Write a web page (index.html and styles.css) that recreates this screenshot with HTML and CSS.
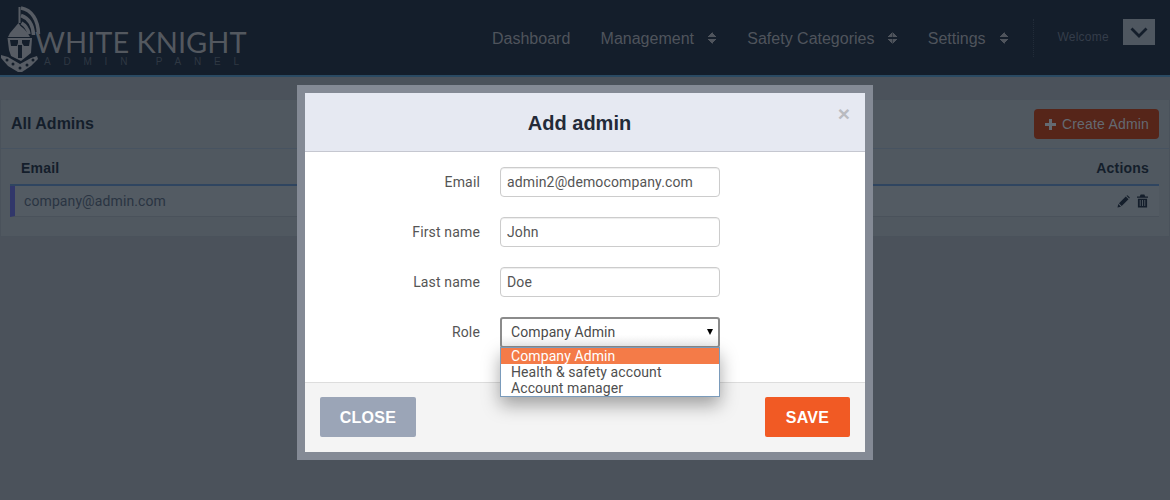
FILE: index.html
```html
<!DOCTYPE html>
<html lang="en">
<head>
<meta charset="utf-8">
<title>All Admins</title>
<link rel="stylesheet" href="styles.css">
</head>
<body>
<header class="topbar">
  <div class="logo">
    <svg class="helmet" width="40" height="70" viewBox="0 0 40 70">
      <path class="plume" d="M20 5C31 7 37 17 37.500 31M20 12.500C27 15 32 21 32.500 32M20.500 20C24 22 27 26 28 31"/>
      <g fill="#575c64">
        <path d="M17.500 4h2v16h-2z"/>
        <path d="M17.500 20 9 30l-2 4h22c-2-4-5-8-9.500-11z"/>
        <path d="M6.500 35H31l-1 15-10 8-10-5-2-6z"/>
        <path d="M0 52l7 2 12 7 11-6 6-2 1 3-7 7-9 6h-4l-10-6-7-8z"/>
      </g>
      <g fill="#141e2b">
        <path d="M9 37h8v3l-1 3H10zM21 37h8l-1 6h-5l-2-3z"/>
        <path d="M17 42h4v13h-4z"/>
        <circle cx="6" cy="57" r="1.500"/><circle cx="12" cy="61" r="1.500"/><circle cx="19" cy="65" r="1.500"/><circle cx="26" cy="62" r="1.500"/><circle cx="32" cy="57" r="1.500"/>
      </g>
    </svg>
    <div class="logo-text">
      <div class="logo-name">WHITE KNIGHT</div>
      <div class="logo-sub">ADMIN PANEL</div>
    </div>
  </div>
  <nav class="nav">
    <a class="nav-item">Dashboard</a>
    <a class="nav-item">Management<span class="updown"></span></a>
    <a class="nav-item">Safety Categories<span class="updown"></span></a>
    <a class="nav-item">Settings<span class="updown"></span></a>
  </nav>
  <div class="user">
    <span class="welcome">Welcome</span>
    <span class="user-toggle">
      <svg width="18" height="11" viewBox="0 0 18 11"><path d="M1.500 1.500 9 9l7.500-7.500" fill="none" stroke="#141e2b" stroke-width="2.800"/></svg>
    </span>
  </div>
</header>

<main class="content">
  <section class="panel">
    <div class="panel-head">
      <h2 class="panel-title">All Admins</h2>
      <button class="create-btn"><span class="plus"></span>Create Admin</button>
    </div>
    <div class="panel-body">
      <div class="table-head"><span>Email</span><span>Actions</span></div>
      <div class="table-row">
        <span>company@admin.com</span>
        <span class="row-actions">
          <svg width="13" height="13" viewBox="0 0 13 13"><path d="M0.500 12.500l0.800-3.500 2.700 2.700zM2 8.300 8.800 1.500l2.700 2.700-6.800 6.800zM9.500 0.800l1-0.500 2.300 2.300-0.600 1z" fill="#141e2b"/></svg>
          <svg width="11" height="14" viewBox="0 0 12 14"><path d="M4 0h4l1 2h3v1.500H0V2h3zM1 4.500h10V14H1zM3 6v6.500h1V6zm2.500 0v6.500h1V6zM8 6v6.500h1V6z" fill="#141e2b" fill-rule="evenodd"/></svg>
        </span>
      </div>
    </div>
  </section>
</main>

<div class="modal">
  <div class="modal-head">
    <h3 class="modal-title">Add admin</h3>
    <span class="modal-x">×</span>
  </div>
  <div class="modal-body">
    <div class="field"><label class="field-label">Email</label><input class="field-input" value="admin2@democompany.com"></div>
    <div class="field"><label class="field-label">First name</label><input class="field-input" value="John"></div>
    <div class="field"><label class="field-label">Last name</label><input class="field-input" value="Doe"></div>
    <div class="field">
      <label class="field-label">Role</label>
      <div class="select-wrap">
        <div class="select-box">Company Admin<span class="select-caret"></span></div>
        <ul class="select-list">
          <li class="active">Company Admin</li>
          <li>Health &amp; safety account</li>
          <li>Account manager</li>
        </ul>
      </div>
    </div>
  </div>
  <div class="modal-foot">
    <button class="btn btn-close">CLOSE</button>
    <button class="btn btn-save">SAVE</button>
  </div>
</div>
</body>
</html>
```
FILE: styles.css
```css
* { box-sizing: border-box; }
html, body { height: 100%; }
body {
  margin: 0;
  height: 500px;
  overflow: hidden;
  background: #4b525b;
  font-family: "Liberation Sans", Arial, sans-serif;
  color: #141e2b;
}
.topbar {
  height: 77px;
  background: #141e2b;
  border-bottom: 2px solid #2a4a63;
  display: flex;
  align-items: flex-start;
}
.logo { display: flex; width: 492px; flex: none; padding: 3px 0 0 1px; }
.helmet { flex: none; }
.plume { fill: none; stroke: #575c64; stroke-width: 3.500px; }
.logo-text { margin-left: -6px; padding-top: 24px; }
.logo-name {
  font-family: Lato, "Liberation Sans", sans-serif;
  font-size: 29px;
  line-height: 30px;
  color: #53585f;
  white-space: nowrap;
}
.logo-sub {
  font-size: 10px;
  line-height: 10px;
  letter-spacing: 12.800px;
  color: #2f3843;
  padding-left: 9px;
  white-space: nowrap;
}
.nav { display: flex; gap: 30.300px; padding-top: 30px; }
.nav-item {
  font-size: 16px;
  line-height: 18px;
  color: #4f545c;
  white-space: nowrap;
}
.updown {
  display: inline-block;
  width: 9px;
  height: 12px;
  margin-left: 14px;
  vertical-align: 0;
  background:
    linear-gradient(to top left, #4f545c 50%, transparent 50%) 0 0 / 4.500px 5px no-repeat,
    linear-gradient(to top right, #4f545c 50%, transparent 50%) 4.500px 0 / 4.500px 5px no-repeat,
    linear-gradient(to bottom left, #4f545c 50%, transparent 50%) 0 7px / 4.500px 5px no-repeat,
    linear-gradient(to bottom right, #4f545c 50%, transparent 50%) 4.500px 7px / 4.500px 5px no-repeat;
}
.user {
  display: flex;
  align-items: flex-start;
  margin: 19px 0 0 24px;
  border-left: 1px dotted #222c39;
  height: 38px;
  padding-left: 24px;
}
.welcome { font-size: 12px; line-height: 14px; letter-spacing: 0.200px; color: #343d4a; margin-top: 11px; }
.user-toggle {
  width: 32px;
  height: 26px;
  background: #4f5760;
  margin-left: 14.500px;
  display: flex;
  align-items: center;
  justify-content: center;
}
.content { padding-top: 22px; }
.panel {
  height: 138px;
  background: #505860;
  border: 1px solid #4a525b;
}
.panel-head {
  height: 49px;
  display: flex;
  align-items: center;
  justify-content: space-between;
  padding: 0 10px;
  border-bottom: 1px solid #475361;
}
.panel-title { margin: 0; font-size: 16px; font-weight: 700; color: #141e2b; }
.create-btn {
  width: 125px;
  height: 30px;
  background: #562519;
  border: 0;
  border-radius: 4px;
  color: #646a72;
  font: 14px "Liberation Sans", Arial, sans-serif;
  letter-spacing: 0.200px;
  display: flex;
  align-items: center;
  justify-content: center;
  gap: 6px;
  padding: 0 0 0 1px;
}
.plus {
  width: 11px;
  height: 11px;
  background:
    linear-gradient(#646a72, #646a72) center / 11px 3px no-repeat,
    linear-gradient(#646a72, #646a72) center / 3px 11px no-repeat;
}
.panel-body { padding: 0 10px 0 9px; }
.table-head {
  height: 37px;
  display: flex;
  justify-content: space-between;
  align-items: center;
  padding: 3px 10px 0 11px;
  font: 700 14px "Liberation Sans", Arial, sans-serif;
  letter-spacing: 0.200px;
  border-bottom: 2px solid #2f4560;
}
.table-row {
  height: 31px;
  background: #535b63;
  border-left: 5px solid #31376a;
  border-bottom: 1px solid #4a525b;
  display: flex;
  justify-content: space-between;
  align-items: center;
  padding: 0 11px 0 9px;
  font: 14px Roboto, "Liberation Sans", sans-serif;
  letter-spacing: 0.100px;
  color: #2a3442;
}
.row-actions { display: flex; gap: 7px; align-items: center; }

.modal {
  position: absolute;
  left: 297px;
  top: 85px;
  width: 576px;
  height: 375px;
  border: 8px solid #848a95;
  background: #fff;
  display: flex;
  flex-direction: column;
}
.modal-head {
  position: relative;
  height: 59px;
  flex: none;
  background: #e6e9f2;
  border-bottom: 1px solid #c5c7d0;
  display: flex;
  align-items: center;
  justify-content: center;
}
.modal-title { margin: 2px 11px 0 0; font-size: 20px; font-weight: 700; color: #232a38; }
.modal-x {
  position: absolute;
  right: 15px;
  top: 10px;
  font-size: 21px;
  font-weight: 700;
  line-height: 21px;
  color: #b9bbc0;
}
.modal-body {
  flex: 1;
  padding-top: 15px;
  display: flex;
  flex-direction: column;
  gap: 20px;
}
.field { display: flex; align-items: center; height: 30px; }
.field-label {
  width: 175px;
  flex: none;
  text-align: right;
  font: 14px Roboto, "Liberation Sans", sans-serif;
  letter-spacing: 0.150px;
  color: #555;
}
.field-input {
  width: 220px;
  height: 30px;
  margin-left: 20px;
  border: 1px solid #ccc;
  border-radius: 4px;
  padding: 0 6px;
  font: 14px Roboto, "Liberation Sans", sans-serif;
  letter-spacing: 0.140px;
  color: #555;
  background: #fff;
  box-shadow: inset 0 1px 1px rgba(0,0,0,.075);
}
.select-wrap { position: relative; margin-left: 20px; width: 220px; height: 31px; }
.select-box {
  height: 31px;
  border: 2px solid #8b8b8b;
  border-radius: 3px;
  background: linear-gradient(#fff 60%, #efefef);
  padding: 0 9px;
  font: 14px/27px Roboto, "Liberation Sans", sans-serif;
  letter-spacing: 0.100px;
  color: #4a4a4a;
  position: relative;
}
.select-caret {
  position: absolute;
  right: 5px;
  top: 10px;
  border: 3px solid transparent;
  border-top: 6px solid #000;
  border-bottom: 0;
}
.select-list {
  position: absolute;
  left: 0;
  top: 30px;
  width: 220px;
  margin: 0;
  padding: 0;
  list-style: none;
  background: #fff;
  border: 1px solid #7a9bbb;
  box-shadow: 0 8px 18px rgba(0,0,0,.35);
  font: 14px/16px Roboto, "Liberation Sans", sans-serif;
  letter-spacing: 0.100px;
  color: #4f4f4f;
  z-index: 2;
}
.select-list li { height: 16px; padding-left: 10px; white-space: nowrap; }
.select-list .active { background: #f47b48; color: #fff; }
.modal-foot {
  height: 70px;
  flex: none;
  background: #f4f4f4;
  border-top: 1px solid #ddd;
  display: flex;
  justify-content: space-between;
  align-items: flex-start;
  padding: 14px 15px 0;
}
.btn {
  height: 40px;
  border: 0;
  border-radius: 2px;
  color: #fff;
  font: 700 16px "Liberation Sans", Arial, sans-serif;
  letter-spacing: 0.300px;
  padding: 2px 0 0;
}
.btn-close { width: 96px; background: #9ba5b7; }
.btn-save { width: 85px; background: #f15a24; }
```
